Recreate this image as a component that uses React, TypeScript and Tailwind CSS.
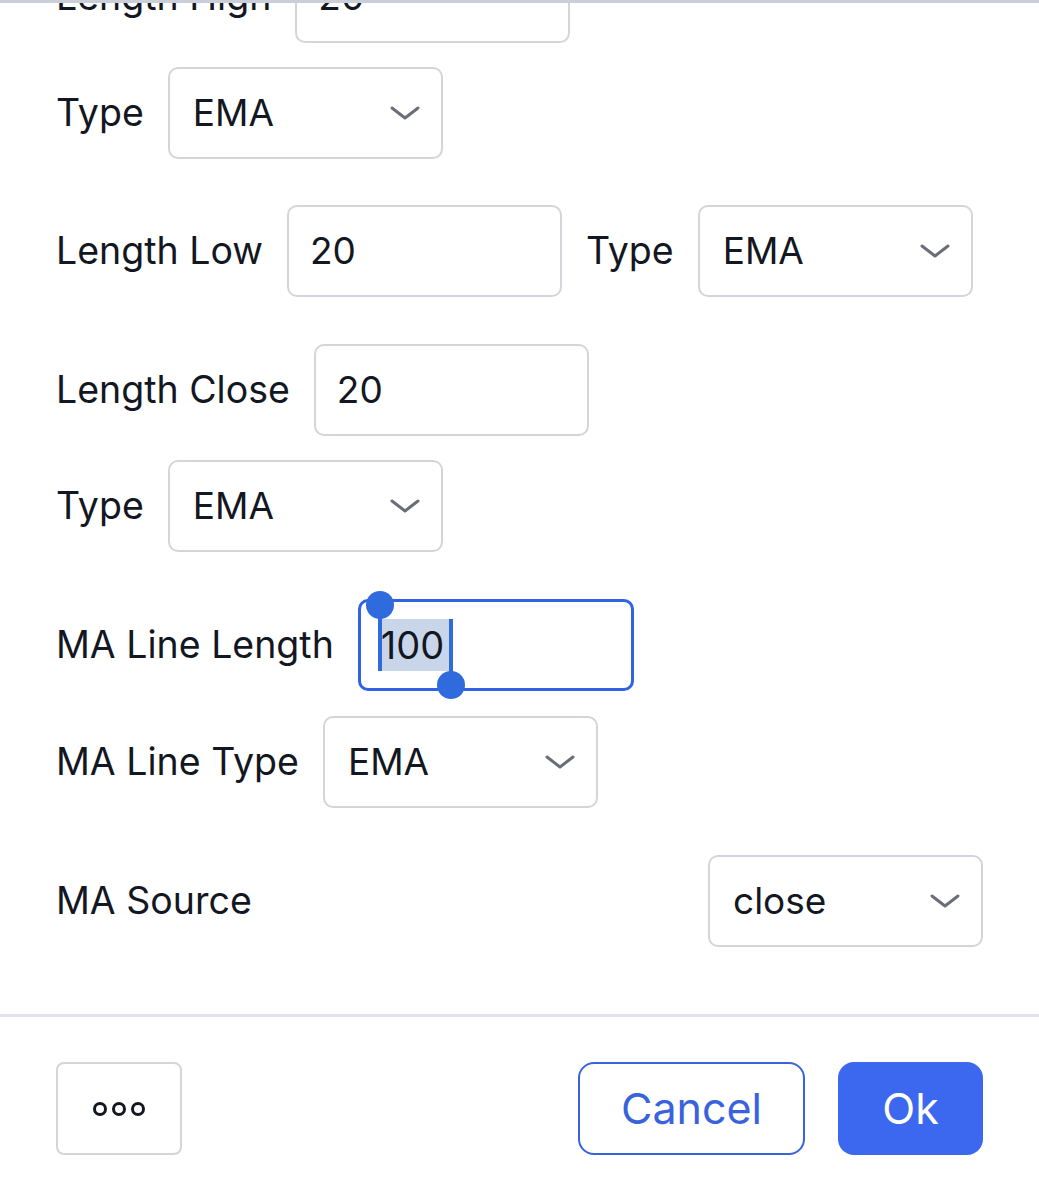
import React from "react";

function Chevron() {
  return (
    <svg width="32" height="18" viewBox="0 0 32 18" fill="none" stroke="#6b6e78" strokeWidth="3" strokeLinecap="round" strokeLinejoin="round">
      <polyline points="3 4 16 14 29 4" />
    </svg>
  );
}

function Label({ children }: { children: React.ReactNode }) {
  return <span className="whitespace-nowrap text-[37.5px] leading-none text-[#131722]">{children}</span>;
}

function TextInput({ value }: { value: string }) {
  return (
    <div className="flex h-[92px] w-[275px] items-center rounded-[10px] border-2 border-[#d3d5db] bg-white pl-[21px] text-[37px] text-[#131722]">
      {value}
    </div>
  );
}

function Select({ value }: { value: string }) {
  return (
    <div className="flex h-[92px] w-[275px] items-center justify-between rounded-[10px] border-2 border-[#d3d5db] bg-white pl-[23px] pr-[20px] text-[37px] text-[#131722]">
      <span>{value}</span>
      <Chevron />
    </div>
  );
}

function Row({ children, className = "" }: { children: React.ReactNode; className?: string }) {
  return <div className={"flex items-center gap-6 " + className}>{children}</div>;
}

export default function App() {
  return (
    <div className="relative h-[1200px] w-[1039px] overflow-hidden bg-white" style={{ fontFamily: "Inter, 'Noto Sans', sans-serif" }}>
      <div className="absolute left-0 right-0 top-0 z-10 h-[3px] bg-[#c9ced8]" />

      <div className="-mt-[49px] pl-[56px] pr-[56px]">
        <Row>
          <Label>Length High</Label>
          <TextInput value="20" />
        </Row>
        <Row className="mt-[24px]">
          <Label>Type</Label>
          <Select value="EMA" />
        </Row>

        <Row className="mt-[46px]">
          <Label>Length Low</Label>
          <TextInput value="20" />
          <Label>Type</Label>
          <Select value="EMA" />
        </Row>

        <Row className="mt-[47px]">
          <Label>Length Close</Label>
          <TextInput value="20" />
        </Row>
        <Row className="mt-[24px]">
          <Label>Type</Label>
          <Select value="EMA" />
        </Row>

        <Row className="mt-[47px]">
          <Label>MA Line Length</Label>
          <div className="flex h-[92px] w-[276px] items-center rounded-[10px] border-[3px] border-[#2f63e4] bg-white pl-[17px] text-[38px] text-[#131722]">
            <span className="relative bg-[#c9d6ea] pl-[3px] pr-[9px] leading-[52px]">
              100
              <span className="absolute left-0 top-[-14px] h-[66px] w-[4px] bg-[#2f6bdc]" />
              <span className="absolute left-[-12px] top-[-28px] h-[28px] w-[28px] rounded-full bg-[#2f6bdc]" />
              <span className="absolute right-0 top-0 h-[66px] w-[4px] bg-[#2f6bdc]" />
              <span className="absolute right-[-12px] top-[52px] h-[28px] w-[28px] rounded-full bg-[#2f6bdc]" />
            </span>
          </div>
        </Row>
        <Row className="mt-[25px]">
          <Label>MA Line Type</Label>
          <Select value="EMA" />
        </Row>

        <div className="mt-[47px] flex items-center justify-between">
          <Label>MA Source</Label>
          <Select value="close" />
        </div>
      </div>

      <div className="mt-[67px] h-[3px] bg-[#e1e3ea]" />

      <div className="mt-[45px] flex items-center justify-between px-[56px]">
        <button className="flex h-[93px] w-[126px] items-center justify-center gap-[5px] rounded-[8px] border-2 border-[#d3d5db] bg-white">
          <span className="h-[14px] w-[14px] rounded-full border-[3px] border-[#131722]" />
          <span className="h-[14px] w-[14px] rounded-full border-[3px] border-[#131722]" />
          <span className="h-[14px] w-[14px] rounded-full border-[3px] border-[#131722]" />
        </button>
        <div className="flex items-center gap-[33px]">
          <button className="h-[93px] w-[227px] rounded-[16px] border-2 border-[#3a62dc] bg-white text-[43px] text-[#3a62dc]">
            Cancel
          </button>
          <button className="h-[93px] w-[145px] rounded-[16px] bg-[#3c68f0] text-[43px] text-white">
            Ok
          </button>
        </div>
      </div>
    </div>
  );
}
